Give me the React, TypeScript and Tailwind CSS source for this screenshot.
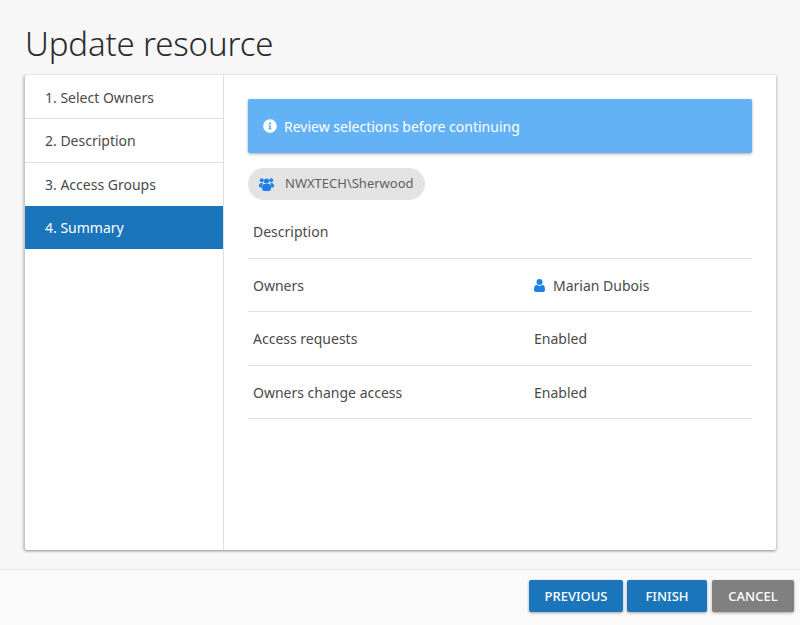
import React from 'react';
import { FaInfoCircle } from 'react-icons/fa';

const steps = ['1. Select Owners', '2. Description', '3. Access Groups'];

const UsersIcon = () => (
  <svg viewBox="0 0 15 13" className="w-[15px] h-[13px] mr-[11px] fill-[#1f80e6]">
    <circle cx="2.8" cy="2.2" r="2" />
    <circle cx="12.2" cy="2.2" r="2" />
    <circle cx="7.5" cy="3" r="2.6" />
    <path d="M0 8.6C0 6.2.8 5 2.2 5h1.6c-.5.8-.7 1.8-.7 3.2H3.1c0 .5 0 .8.1 1.2H1C.3 9.4 0 9.1 0 8.6z" />
    <path d="M15 8.6C15 6.2 14.2 5 12.8 5h-1.6c.5.8.7 1.8.7 3.2h0c0 .5 0 .8-.1 1.2H14c.7 0 1-.3 1-.8z" />
    <path d="M4.9 6h5.2c1.3 0 1.9 1.500 1.900 4 0 2-.7 3-2 3H5c-1.300 0-2-1-2-3 0-2.500.6-4 1.900-4z" />
  </svg>
);

const UserIcon = () => (
  <svg viewBox="0 0 11 13" className="w-[11px] h-[13px] mr-[8px] fill-[#1f80e6]">
    <circle cx="5.5" cy="3" r="3" />
    <path d="M2.600 5.800C3.400 6.500 4.400 6.900 5.500 6.900s2.100-.4 2.900-1.100C10.100 6.200 11 8 11 10.800 11 12.200 10.200 13 9 13H2C.8 13 0 12.200 0 10.800 0 8 .9 6.200 2.600 5.800z" />
  </svg>
);

const App: React.FC = () => {
  return (
    <div className="h-[625px] w-[800px] flex flex-col bg-[#f7f7f7] overflow-hidden font-['Noto_Sans','Open_Sans',sans-serif] text-[#333]">
      {/* Title */}
      <h1 className="h-[75px] pl-[25px] pt-[21px] text-[33px] leading-[46px] font-light text-[#2b2b2b] tracking-[-0.15px]">
        Update resource
      </h1>

      {/* Card */}
      <div className="mx-[24px] h-[475px] flex bg-white rounded-[2px] border-l border-[#c8c8c8] shadow-[0_1px_3px_rgba(0,0,0,0.45)]">
        {/* Steps */}
        <div className="w-[199px] shrink-0 border-r border-[#e0e0e0]">
          <div className="h-[44px] pl-[20px] pt-[1px] flex items-center text-[14px] text-[#4a4a4a] border-b border-[#e0e0e0]">{steps[0]}</div>
          <div className="h-[44px] pl-[20px] flex items-center text-[14px] text-[#4a4a4a] border-b border-[#e0e0e0]">{steps[1]}</div>
          <div className="h-[43px] pl-[20px] flex items-center text-[14px] text-[#4a4a4a]">{steps[2]}</div>
          <div className="h-[43px] pl-[20px] flex items-center text-[14px] text-white bg-[#1b75bb]">4. Summary</div>
        </div>

        {/* Summary */}
        <div className="flex-1 pl-[24px] pr-[24px] pt-[24px]">
          <div className="h-[54px] flex items-center gap-[7px] pl-[15px] bg-[#64b2f6] rounded-[2px] text-white text-[14px] shadow-[0_1px_3px_rgba(0,0,0,0.35)]">
            <FaInfoCircle className="w-[14px] h-[14px]" />
            <span>Review selections before continuing</span>
          </div>

          <div className="mt-[15px] w-[177px] h-[32px] flex items-center rounded-full bg-[#e3e3e3] pl-[11px] text-[13px] text-[#616161]">
            <UsersIcon />
            <span>NWXTECH\Sherwood</span>
          </div>

          <div className="mt-[5px] text-[14px] text-[#4a4a4a]">
            <div className="h-[54px] flex items-center pl-[5px] border-b border-[#e0e0e0]">Description</div>
            <div className="h-[53px] flex items-center pl-[5px] border-b border-[#e0e0e0]">
              <span className="w-[281px]">Owners</span>
              <UserIcon />
              <span>Marian Dubois</span>
            </div>
            <div className="h-[54px] flex items-center pl-[5px] border-b border-[#e0e0e0]">
              <span className="w-[281px]">Access requests</span>
              <span>Enabled</span>
            </div>
            <div className="h-[53px] flex items-center pl-[5px] border-b border-[#e0e0e0]">
              <span className="w-[281px]">Owners change access</span>
              <span>Enabled</span>
            </div>
          </div>
        </div>
      </div>

      {/* Footer */}
      <div className="mt-[19px] flex-1 border-t border-[#e5e5e5] bg-[#fafafa] flex justify-end items-start pt-[10px] pr-[6px] text-[13px] font-medium text-white">
        <button className="w-[94px] h-[32px] pt-[1px] rounded-[2px] bg-[#1b75bb] shadow-[0_1px_3px_rgba(0,0,0,0.35)]">PREVIOUS</button>
        <button className="ml-[4px] w-[80px] h-[32px] pt-[1px] rounded-[2px] bg-[#1b75bb] shadow-[0_1px_3px_rgba(0,0,0,0.35)]">FINISH</button>
        <button className="ml-[5px] w-[82px] h-[32px] pt-[1px] rounded-[2px] bg-[#808080] shadow-[0_1px_3px_rgba(0,0,0,0.35)]">CANCEL</button>
      </div>
    </div>
  );
};

export default App;
